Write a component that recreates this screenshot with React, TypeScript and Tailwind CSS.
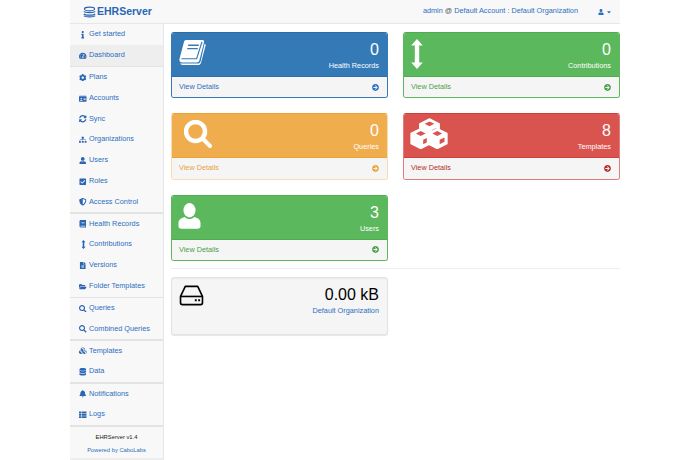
import type { ReactNode } from "react";
import type { IconType } from "react-icons";
import {
  FaArrowCircleRight,
  FaBell,
  FaCheckSquare,
  FaCog,
  FaCubes,
  FaDatabase,
  FaFileAlt,
  FaFolderOpen,
  FaIdCard,
  FaInfo,
  FaSearch,
  FaShieldAlt,
  FaSitemap,
  FaSyncAlt,
  FaTachometerAlt,
  FaThList,
  FaUser,
  FaBook,
  FaCaretDown,
} from "react-icons/fa";

type NavItem = { label: string; icon: IconType | (() => ReactNode); active?: boolean };

const SmallArrows = () => (
  <svg viewBox="0 0 8 16" className="h-[9px] w-[9px]" fill="currentColor">
    <path d="M4 0 7.5 4H5.4v8h2.1L4 16 .5 12h2.1V4H.5z" />
  </svg>
);

const navGroups: NavItem[][] = [
  [
    { label: "Get started", icon: FaInfo },
    { label: "Dashboard", icon: FaTachometerAlt, active: true },
  ],
  [
    { label: "Plans", icon: FaCog },
    { label: "Accounts", icon: FaIdCard },
    { label: "Sync", icon: FaSyncAlt },
    { label: "Organizations", icon: FaSitemap },
    { label: "Users", icon: FaUser },
    { label: "Roles", icon: FaCheckSquare },
    { label: "Access Control", icon: FaShieldAlt },
  ],
  [
    { label: "Health Records", icon: FaBook },
    { label: "Contributions", icon: SmallArrows },
    { label: "Versions", icon: FaFileAlt },
    { label: "Folder Templates", icon: FaFolderOpen },
  ],
  [
    { label: "Queries", icon: FaSearch },
    { label: "Combined Queries", icon: FaSearch },
  ],
  [
    { label: "Templates", icon: FaCubes },
    { label: "Data", icon: FaDatabase },
  ],
  [
    { label: "Notifications", icon: FaBell },
    { label: "Logs", icon: FaThList },
  ],
];

const BookIcon = () => (
  <svg viewBox="0 0 30 28" className="-ml-[1px] -mt-[3px] h-[27px] w-[29px]" fill="none">
    <path
      d="M8 1h17.500c1.200 0 1.800 1 1.500 2.200L22.200 22c-.4 1.500-1.400 2.300-2.900 2.300H4c-2 0-3-1.500-2.500-3.500L6 3.500C6.300 2 7 1 8 1z"
      fill="white"
    />
    <path d="M3.500 20.500h15.800L24.800 3" stroke="#337ab7" strokeWidth="1.200" />
    <path d="M27.500 5 28.800 6 24 24c-.5 2-1.700 3-3.500 3H5c-1.500 0-2.500-.6-3-1.500h18c1.800 0 3-.8 3.500-2.800z" fill="white" />
    <path d="M10.500 6.500h11M9.500 10h11" stroke="#337ab7" strokeWidth="1.500" />
  </svg>
);

const ArrowsIcon = () => (
  <svg viewBox="0 0 12 30" className="h-[30px] w-[12px]" fill="white">
    <path d="M6 0 11.800 6.500H8.200v17h3.600L6 30 .2 23.500h3.600v-17H.2z" />
  </svg>
);

const SearchIcon = () => (
  <svg viewBox="0 0 28 28" className="ml-[5px] -mt-[1px] h-[28px] w-[28px]" fill="none" stroke="white">
    <circle cx="11.500" cy="11.500" r="9.500" strokeWidth="4.500" />
    <path d="M18.500 18.500 26 26" strokeWidth="4" strokeLinecap="round" />
  </svg>
);

// one isometric block of the templates icon
const Cube = ({ x, y }: { x: number; y: number }) => (
  <g transform={`translate(${x} ${y})`}>
    <path d="M10 0 20 5v10.500l-10 5-10-5V5z" fill="white" stroke="white" strokeWidth="1.500" strokeLinejoin="round" />
    <path d="M10 2.500 15 5l-5 2.500L5 5z" fill="#d9534f" />
    <path d="M12.500 11.500 17.500 9v4.500l-5 2.500z" fill="#d9534f" />
  </g>
);

const CubesIcon = () => (
  <svg viewBox="0 0 39 32" className="-ml-[1px] -mt-[3px] h-[31px] w-[38px]">
    <Cube x={10} y={1} />
    <Cube x={1} y={11} />
    <Cube x={18} y={11} />
  </svg>
);

const PersonIcon = () => (
  <svg viewBox="0 0 24 27" className="-ml-[1px] -mt-[1px] h-[26px] w-[23px]" fill="white">
    <ellipse cx="12" cy="7.500" rx="6.300" ry="7.500" />
    <path d="M7 14.500c-4 1-6.500 3-6.500 6.500v3c0 1.800 1 2.800 2.800 2.800h17.400c1.800 0 2.800-1 2.800-2.800v-3c0-3.500-2.500-5.500-6.500-6.500-1.500 1.500-3 2.200-5 2.200s-3.500-.7-5-2.200z" />
  </svg>
);

const DiskIcon = () => (
  <svg viewBox="0 0 26 22" className="-mt-[1px] h-[21px] w-[25px]" fill="none" stroke="black" strokeWidth="1.700">
    <path d="M6.500 1.500h13l5 10.500v6.500c0 1.200-.8 2-2 2h-19c-1.200 0-2-.8-2-2V12z" strokeLinejoin="round" />
    <path d="M1.500 12h23" />
    <path d="M16.500 16h2M20 16h2" strokeWidth="2" />
  </svg>
);

const LogoIcon = () => (
  <svg viewBox="0 0 14 12" className="h-[12px] w-[13px]" fill="none" stroke="currentColor" strokeWidth="1.200">
    <ellipse cx="7" cy="2.800" rx="5.500" ry="2" />
    <path d="M1 5.300c1 1.800 11 1.800 12 0M1 8c1 1.800 11 1.800 12 0M1 10c1 1.600 11 1.600 12 0" />
  </svg>
);

type StatCardProps = {
  count: string;
  label: string;
  icon: ReactNode;
  headClass: string;
  borderClass: string;
  linkClass: string;
};

const StatCard = ({ count, label, icon, headClass, borderClass, linkClass }: StatCardProps) => (
  <div className={`flex h-[66.400px] flex-col overflow-hidden rounded-[3px] border ${borderClass}`}>
    <div className={`flex h-[44px] shrink-0 items-start justify-between border-b pt-[7px] pr-[8px] pl-[7px] text-white ${headClass}`}>
      <div className="-mt-[2px] flex h-[31px] w-[38px] items-center">{icon}</div>
      <div className="text-right">
        <div className="text-[16px] leading-[20px]">{count}</div>
        <div className="text-[7.300px] leading-[12px]">{label}</div>
      </div>
    </div>
    <div className={`flex flex-1 items-center justify-between bg-[#f5f5f5] pr-[8px] pl-[7px] text-[7.300px] ${linkClass}`}>
      <span>View Details</span>
      <FaArrowCircleRight className="h-[7px] w-[7px]" />
    </div>
  </div>
);

export default function App() {
  return (
    <div className="h-[460px] w-[690px] overflow-hidden bg-white font-['Liberation_Sans',sans-serif]">
      <div className="mx-[70px] w-[550px]">
        <header className="flex h-[24px] items-center justify-between border-b border-[#e7e7e7] bg-[#f8f8f8] pr-[8px] pl-[13px] text-[#2d6fc0]">
          <div className="flex items-center gap-[1px] text-[10.500px] font-bold text-[#2a66b3]">
            <LogoIcon />
            <span>EHRServer</span>
          </div>
          <div className="flex items-center text-[7.300px]">
            <span>
              admin <span className="text-[#555]">@</span> Default Account <span className="text-[#555]">:</span> Default Organization
            </span>
            <FaUser className="ml-[20px] h-[6px] w-[6px]" />
            <FaCaretDown className="ml-[2px] h-[6px] w-[6px]" />
          </div>
        </header>

        <div className="flex">
          <aside className="flex h-[436px] w-[94px] shrink-0 flex-col border-r border-[#e7e7e7] bg-[#f8f8f8] pt-[0.500px]">
            {navGroups.map((group, i) => (
              <nav key={i}>
                {group.map((item) => (
                  <div
                    key={item.label}
                    className={`flex h-[20.720px] items-center pl-[8px] text-[7.300px] text-[#2d6fc0] ${item.active ? "bg-[#eeeeee]" : ""}`}
                  >
                    <span className="flex w-[10px] items-center justify-center text-[7.500px] text-[#2a66b3]">
                      <item.icon />
                    </span>
                    <span className="ml-[1px]">{item.label}</span>
                  </div>
                ))}
                <div className="h-[1.400px] bg-[#e3e3e3]" />
              </nav>
            ))}
            <div className="flex h-[31px] flex-col items-center pt-[6px] text-[5.800px] leading-[8px]">
              <div className="text-[#222]">EHRServer v1.4</div>
              <div className="mt-[5px] text-[#2d6fc0]">Powered by CaboLabs</div>
            </div>
            <div className="flex-1 bg-[#eeeeee]" />
          </aside>

          <main className="flex-1 pt-[8px] pl-[7px]">
            <div className="grid grid-cols-2 gap-x-[15px] gap-y-[15px]">
              <StatCard
                count="0"
                label="Health Records"
                icon={<BookIcon />}
                headClass="border-[#2e6da4] bg-[#337ab7]"
                borderClass="border-[#337ab7] border-t-[#2e6da4]"
                linkClass="text-[#2d6fc0]"
              />
              <StatCard
                count="0"
                label="Contributions"
                icon={<ArrowsIcon />}
                headClass="border-[#4cae4c] bg-[#5cb85c]"
                borderClass="border-[#5cb85c] border-t-[#4cae4c]"
                linkClass="text-[#4a9f4a]"
              />
              <StatCard
                count="0"
                label="Queries"
                icon={<SearchIcon />}
                headClass="border-[#eea236] bg-[#f0ad4e]"
                borderClass="border-[#f8dcae] border-t-[#eea236]"
                linkClass="text-[#e8a33f]"
              />
              <StatCard
                count="8"
                label="Templates"
                icon={<CubesIcon />}
                headClass="border-[#d43f3a] bg-[#d9534f]"
                borderClass="border-[#e27c79] border-t-[#d43f3a]"
                linkClass="text-[#b52f2b]"
              />
              <StatCard
                count="3"
                label="Users"
                icon={<PersonIcon />}
                headClass="border-[#4cae4c] bg-[#5cb85c]"
                borderClass="border-[#5cb85c] border-t-[#4cae4c]"
                linkClass="text-[#4a9f4a]"
              />
            </div>

            <hr className="mt-[6.500px] mb-[8px] border-[#eeeeee]" />

            <div className="grid grid-cols-2 gap-x-[15px]">
              <div className="flex h-[58px] items-start justify-between rounded-[3px] border border-[#e3e3e3] bg-[#f5f5f5] pt-[8px] pr-[8px] pl-[7px] shadow-[inset_0_1px_1px_rgba(0,0,0,0.05),0_1px_1px_rgba(0,0,0,0.1)]">
                <DiskIcon />
                <div className="-mt-[0.500px] text-right">
                  <div className="text-[16px] leading-[20px] text-black">0.00 kB</div>
                  <div className="text-[7.300px] leading-[11px] text-[#2d6fc0]">Default Organization</div>
                </div>
              </div>
            </div>
          </main>
        </div>
      </div>
    </div>
  );
}
